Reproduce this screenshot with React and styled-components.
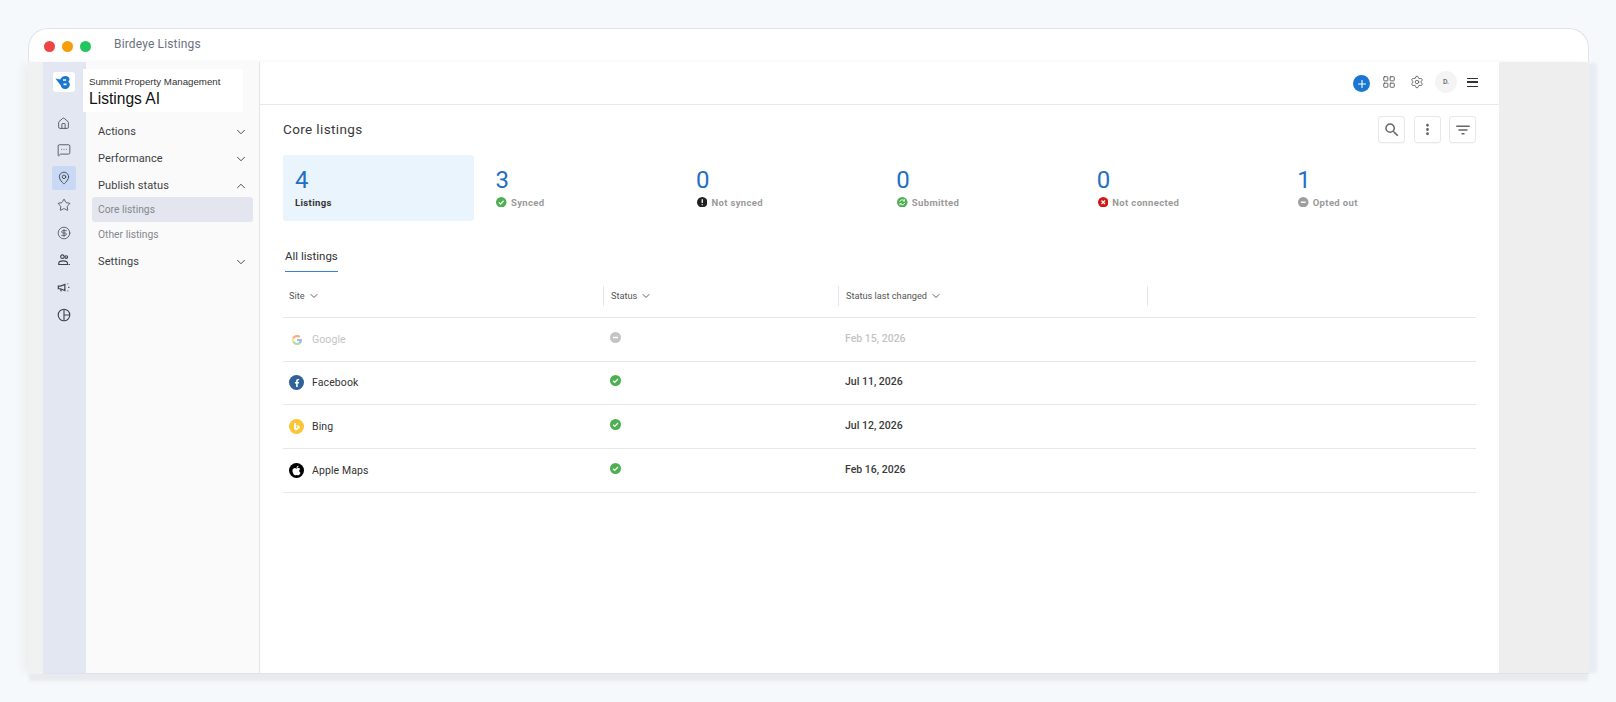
import React from 'react'
import styled, { createGlobalStyle } from 'styled-components'
import {
  House, MessageSquareMore, MapPin, Star, CircleDollarSign,
  ChevronDown, ChevronUp, Plus, LayoutGrid, Settings,
} from 'lucide-react'
import { FcGoogle } from 'react-icons/fc'
import { FaFacebookF, FaApple } from 'react-icons/fa'
import { MdSearch, MdMoreVert, MdFilterList } from 'react-icons/md'

const GlobalStyle = createGlobalStyle`
  html, body { margin: 0; padding: 0; background: #f5f9fc; }
  body { font-family: Roboto, "Liberation Sans", sans-serif; color: #212121; overflow: hidden; }
  * { box-sizing: border-box; }
`

const Page = styled.div`
  width: 1616px;
  height: 702px;
  padding: 28px 27px 0 28px;
`

const Window = styled.div`
  width: 1561px;
  height: 646px;
  display: flex;
  flex-direction: column;
`

const TitleBar = styled.div`
  height: 34px;
  flex: none;
  display: flex;
  align-items: center;
  background: #fff;
  border: 1px solid #dfe3ec;
  border-bottom: 0;
  border-radius: 20px 20px 0 0;
  padding: 0 0 0 15px;
`

const Dot = styled.span`
  width: 11px;
  height: 11px;
  border-radius: 50%;
  margin-right: 7px;
  margin-top: 1px;
  background: ${p => p.$color};
`

const WindowTitle = styled.div`
  margin-left: 16px;
  font-size: 12px;
  letter-spacing: 0.15px;
  color: #6c7280;
  margin-top: -3px;
`

const Body = styled.div`
  flex: 1;
  min-height: 0;
  display: flex;
  background: #f0f1f1;
  padding-left: 15px;
  box-shadow: 0 8px 3px -1px #e8eaee, 9px 0 3px -1px #e8ecf3, -9px 0 7px -2px #eff1f2;
`

const Rail = styled.nav`
  width: 43px;
  flex: none;
  background: #e3e7f1;
  border-bottom: 1px solid #dce3f0;
  display: flex;
  flex-direction: column;
  align-items: center;
  padding: 10px 2px 0 0;
`

const LogoBox = styled.div`
  width: 22px;
  height: 20px;
  background: #fff;
  border-radius: 3px;
  display: flex;
  align-items: center;
  justify-content: center;
  margin-bottom: 19px;
`

const RailItem = styled.div`
  width: 24px;
  height: 24px;
  margin-bottom: 3.4px;
  border-radius: 2px;
  display: flex;
  align-items: center;
  justify-content: center;
  color: #3f444c;
  background: ${p => (p.$active ? '#c9d9f5' : 'transparent')};
`

const Panel = styled.aside`
  width: 174px;
  flex: none;
  background: #fafafa;
  border-right: 1px solid #e4e6ea;
  border-bottom: 1px solid #dce3f0;
  padding-top: 7px;
`

const Brand = styled.div`
  width: 160px;
  height: 43px;
  margin-left: -3px;
  margin-bottom: 6px;
  background: #fff;
  padding: 6px 6px;
  font-family: "Liberation Sans", Arial, sans-serif;
  color: #111;
`

const BrandOrg = styled.div`
  font-size: 9.7px;
  line-height: 13px;
  color: #333;
`

const BrandName = styled.div`
  font-size: 15.6px;
  line-height: 21px;
`

const NavGroup = styled.div`
  height: 27px;
  padding: 0 11px 0 12px;
  margin-bottom: ${p => (p.$open ? '-2px' : '0')};
  display: flex;
  align-items: center;
  justify-content: space-between;
  font-size: 11px;
  letter-spacing: 0.1px;
  color: #3c3f44;
`

const SubItem = styled.div`
  height: 25px;
  margin: 0 6px 0 6px;
  padding-left: 6px;
  border-radius: 3px;
  display: flex;
  align-items: center;
  font-size: 10.3px;
  color: #85888e;
  background: ${p => (p.$active ? '#e3e6ef' : 'transparent')};
  margin-bottom: ${p => (p.$active ? '0' : '1px')};
`

const Main = styled.main`
  width: 1239px;
  flex: none;
  background: #fff;
  border-bottom: 1px solid #dce3f0;
  display: flex;
  flex-direction: column;
`

const TopBar = styled.header`
  height: 43px;
  flex: none;
  border-bottom: 1px solid #e8e9ec;
  display: flex;
  align-items: center;
  justify-content: flex-end;
  padding-right: 19px;
  gap: 9px;
`

const AddButton = styled.div`
  width: 17px;
  height: 17px;
  border-radius: 50%;
  background: #1976d2;
  color: #fff;
  display: flex;
  align-items: center;
  justify-content: center;
  margin: 1px 0 0 0;
`

const TopIcon = styled.div`
  width: 20px;
  display: flex;
  justify-content: center;
  color: #555;
  margin-top: -2px;
  margin-right: ${p => (p.$tight ? '-1px' : '0')};
`

const Avatar = styled.div`
  width: 22px;
  height: 22px;
  border-radius: 50%;
  background: #f4f4f4;
  display: flex;
  align-items: center;
  justify-content: center;
  font-size: 7px;
  font-weight: 500;
  color: #666;
  margin-top: -2px;
`

const Burger = styled.div`
  width: 11px;
  height: 9px;
  margin-left: 1px;
  margin-right: 2px;
  margin-top: -1px;
  border-top: 1.5px solid #333;
  border-bottom: 1.5px solid #333;
  position: relative;
  &::after {
    content: '';
    position: absolute;
    left: 0;
    right: 0;
    top: 2.2px;
    height: 1.5px;
    background: #333;
  }
`

const Content = styled.div`
  flex: 1;
  padding: 11px 23px 0;
`

const HeadRow = styled.div`
  height: 28px;
  display: flex;
  align-items: center;
  justify-content: space-between;
`

const Heading = styled.h1`
  margin: -3px 0 0;
  font-size: 13.5px;
  font-weight: 400;
  letter-spacing: 0.38px;
  color: #3a3a3a;
`

const Tools = styled.div`
  display: flex;
  gap: 8.5px;
  margin-top: -1px;
`

const ToolButton = styled.div`
  width: 27px;
  height: 27px;
  border: 1px solid #e8e8e8;
  border-radius: 3px;
  background: #fff;
  box-shadow: 0 1px 1px rgba(0, 0, 0, 0.03);
  display: flex;
  align-items: center;
  justify-content: center;
  color: #666;
`

const Stats = styled.section`
  display: flex;
  gap: 9.6px;
  margin-top: 11px;
`

const Stat = styled.div`
  flex: 1;
  height: 66px;
  padding: 12px 12px 0;
  border-radius: 3px;
  background: ${p => (p.$active ? '#eaf4fc' : 'transparent')};
`

const StatValue = styled.div`
  font-size: 24px;
  line-height: 26px;
  color: #1f6fc4;
  font-weight: 400;
`

const StatLabel = styled.div`
  margin-top: 4px;
  display: flex;
  align-items: center;
  gap: 4px;
  font-size: 9.5px;
  line-height: 12px;
  font-weight: 700;
  letter-spacing: 0.36px;
  color: ${p => (p.$active ? '#333' : '#9a9a9a')};
  svg { margin: -2px 0 0 1px; }
`

const Tabs = styled.div`
  margin-top: 24px;
  height: 29px;
`

const Tab = styled.div`
  display: inline-block;
  margin-left: 2px;
  height: 25px;
  padding-top: 2px;
  font-size: 11.5px;
  color: #333;
  border-bottom: 1px solid #3b7fd4;
`

const Grid = styled.div`
  display: grid;
  grid-template-columns: 320px 235px 309px 1fr;
  height: ${p => p.$height};
  align-items: center;
  border-bottom: 1px solid #e6e7ea;
`

const HeadCell = styled.div`
  height: 20px;
  display: flex;
  align-items: center;
  gap: 3px;
  padding-left: ${p => (p.$first ? '6px' : '7px')};
  font-size: 9.2px;
  color: #555;
  border-left: ${p => (p.$first ? '0' : '1px solid #e6e7ea')};
  svg { color: #333; }
`

const SiteCell = styled.div`
  display: flex;
  align-items: center;
  gap: 8px;
  padding-left: 6px;
  font-size: 10.5px;
  letter-spacing: 0.1px;
  color: ${p => (p.$muted ? '#c4c4c4' : '#333')};
`

const StatusCell = styled.div`
  padding-left: 7px;
  display: flex;
  margin-top: -4px;
  opacity: ${p => (p.$muted ? 0.6 : 1)};
`

const DateCell = styled.div`
  padding-left: 7px;
  font-size: 10.5px;
  font-weight: 500;
  margin-top: -2px;
  color: ${p => (p.$muted ? '#c4c4c4' : '#3a3a3a')};
`

const SiteBadge = styled.span`
  width: 15px;
  height: 15px;
  border-radius: 50%;
  flex: none;
  display: flex;
  align-items: center;
  justify-content: center;
  color: #fff;
  background: ${p => p.$bg};
  opacity: ${p => (p.$muted ? 0.45 : 1)};
`

const Gutter = styled.div`
  flex: 1;
  background: #eee;
  border-bottom: 1px solid #dce3f0;
`

function StatusIcon({ type, size = 10.5 }) {
  const fill = { ok: '#4caf50', bad: '#212121', sub: '#4caf50', off: '#d11a16', out: '#9e9e9e' }[type]
  return (
    <svg width={size} height={size} viewBox="0 0 12 12" style={{ flex: 'none' }}>
      <circle cx="6" cy="6" r="6" fill={fill} />
      {type === 'ok' && <path d="M3.3 6.2l1.9 1.9 3.5-3.8" fill="none" stroke="#fff" strokeWidth="1.4" />}
      {type === 'bad' && <path d="M6 2.6v4.2M6 8.2v1.2" fill="none" stroke="#fff" strokeWidth="1.5" />}
      {type === 'sub' && <path d="M3 5.5a3 3 0 0 1 5.4-1M9 6.5a3 3 0 0 1-5.4 1M8.6 2.6v2H6.7M3.4 9.4v-2h1.9" fill="none" stroke="#fff" strokeWidth="1" />}
      {type === 'off' && <path d="M4 4l4 4M8 4l-4 4" fill="none" stroke="#fff" strokeWidth="1.4" />}
      {type === 'out' && <path d="M3.2 6h5.6" fill="none" stroke="#fff" strokeWidth="1.6" />}
    </svg>
  )
}

const BirdLogo = () => (
  <svg width="17" height="15" viewBox="0 0 18 16">
    <path d="M.5 3.6l5 1.2C6.6 2.2 8.8 1 11.2 1c2.5 0 4.2 1.4 4.2 3.4 0 1.2-.6 2.1-1.4 2.7 1 .6 1.7 1.6 1.7 2.9 0 2.8-2.2 4.9-5 4.9-2.5 0-4.3-1.5-4.8-3.9L.5 3.6z" fill="#1976d2" />
    <path d="M8.4 4.4h3.4v1.7H8.4zM9 9h3.2v1.9H9z" fill="#fff" />
  </svg>
)

const PeopleIcon = () => (
  <svg width="14" height="14" viewBox="0 0 16 16" fill="none" stroke="currentColor" strokeWidth="1.3">
    <circle cx="6.2" cy="4.2" r="2" />
    <circle cx="10.6" cy="4.6" r="1.5" />
    <path d="M2 13.2v-1.4C2 10.2 4 9 7 9s5 1.2 5 2.8v1.4z" />
    <path d="M13.2 13.2h1.6" />
  </svg>
)

const HornIcon = () => (
  <svg width="14" height="14" viewBox="0 0 16 16" fill="none" stroke="currentColor" strokeWidth="1.4">
    <path d="M1.5 7v3h2.5l5 2V5L4 7z" />
    <path d="M4 10.5l1 2.5" />
    <path d="M12 4.5h.8M12.8 8.5h1.4M12 12.5h.8" />
  </svg>
)

const PieIcon = () => (
  <svg width="14" height="14" viewBox="0 0 16 16" fill="none" stroke="currentColor" strokeWidth="1.3">
    <circle cx="8" cy="8" r="6.6" />
    <path d="M8 1.4v13.2M8 8h6.6" />
  </svg>
)

const BingMark = () => (
  <svg width="9" height="9" viewBox="0 0 10 10">
    <path d="M2.4.8l2 .7v5.4l2.2-1.2-1.1-.5-.7-1.8 4 1.4v2L4.4 9.4l-2-1.1z" fill="#fff" />
  </svg>
)

const railItems = [
  { icon: <House size={13} strokeWidth={1.5} /> },
  { icon: <MessageSquareMore size={14} strokeWidth={1.4} /> },
  { icon: <MapPin size={14} strokeWidth={1.5} />, active: true },
  { icon: <Star size={14} strokeWidth={1.4} /> },
  { icon: <CircleDollarSign size={14} strokeWidth={1.3} /> },
  { icon: <PeopleIcon /> },
  { icon: <HornIcon /> },
  { icon: <PieIcon /> },
]

const stats = [
  { value: 4, label: 'Listings', active: true },
  { value: 3, label: 'Synced', type: 'ok' },
  { value: 0, label: 'Not synced', type: 'bad' },
  { value: 0, label: 'Submitted', type: 'sub' },
  { value: 0, label: 'Not connected', type: 'off' },
  { value: 1, label: 'Opted out', type: 'out' },
]

const rows = [
  { site: 'Google', date: 'Feb 15, 2026', status: 'out', height: '44px', muted: true, badge: '#fff', mark: <FcGoogle size={12} /> },
  { site: 'Facebook', date: 'Jul 11, 2026', status: 'ok', height: '42.5px', badge: '#2f6296', mark: <FaFacebookF size={8} /> },
  { site: 'Bing', date: 'Jul 12, 2026', status: 'ok', height: '44.5px', badge: '#fcc536', mark: <BingMark /> },
  { site: 'Apple Maps', date: 'Feb 16, 2026', status: 'ok', height: '44px', badge: '#000', mark: <FaApple size={11} /> },
]

const Chev = () => <ChevronDown size={14} strokeWidth={1.6} />
const SmallChev = () => <ChevronDown size={12} strokeWidth={1.6} />

export default function App() {
  return (
    <Page>
      <GlobalStyle />
      <Window>
        <TitleBar>
          <Dot $color="#ef4444" />
          <Dot $color="#f59e0b" />
          <Dot $color="#22c55e" />
          <WindowTitle>Birdeye Listings</WindowTitle>
        </TitleBar>
        <Body>
          <Rail>
            <LogoBox><BirdLogo /></LogoBox>
            {railItems.map((item, i) => (
              <RailItem key={i} $active={item.active}>{item.icon}</RailItem>
            ))}
          </Rail>
          <Panel>
            <Brand>
              <BrandOrg>Summit Property Management</BrandOrg>
              <BrandName>Listings AI</BrandName>
            </Brand>
            <NavGroup>Actions <Chev /></NavGroup>
            <NavGroup>Performance <Chev /></NavGroup>
            <NavGroup $open>Publish status <ChevronUp size={14} strokeWidth={1.6} /></NavGroup>
            <SubItem $active>Core listings</SubItem>
            <SubItem>Other listings</SubItem>
            <NavGroup>Settings <Chev /></NavGroup>
          </Panel>
          <Main>
            <TopBar>
              <AddButton><Plus size={12} strokeWidth={2.2} /></AddButton>
              <TopIcon $tight><LayoutGrid size={14} strokeWidth={1.5} /></TopIcon>
              <TopIcon $tight><Settings size={14} strokeWidth={1.4} /></TopIcon>
              <Avatar>D.</Avatar>
              <Burger />
            </TopBar>
            <Content>
              <HeadRow>
                <Heading>Core listings</Heading>
                <Tools>
                  <ToolButton><MdSearch size={18} /></ToolButton>
                  <ToolButton><MdMoreVert size={17} /></ToolButton>
                  <ToolButton><MdFilterList size={18} /></ToolButton>
                </Tools>
              </HeadRow>
              <Stats>
                {stats.map(s => (
                  <Stat key={s.label} $active={s.active}>
                    <StatValue>{s.value}</StatValue>
                    <StatLabel $active={s.active}>
                      {s.type && <StatusIcon type={s.type} />}
                      {s.label}
                    </StatLabel>
                  </Stat>
                ))}
              </Stats>
              <Tabs><Tab>All listings</Tab></Tabs>
              <Grid $height="44px">
                <HeadCell $first>Site <SmallChev /></HeadCell>
                <HeadCell>Status <SmallChev /></HeadCell>
                <HeadCell>Status last changed <SmallChev /></HeadCell>
                <HeadCell />
              </Grid>
              {rows.map(r => (
                <Grid key={r.site} $height={r.height}>
                  <SiteCell $muted={r.muted}>
                    <SiteBadge $bg={r.badge} $muted={r.muted}>{r.mark}</SiteBadge>
                    {r.site}
                  </SiteCell>
                  <StatusCell $muted={r.muted}><StatusIcon type={r.status} size={11} /></StatusCell>
                  <DateCell $muted={r.muted}>{r.date}</DateCell>
                </Grid>
              ))}
            </Content>
          </Main>
          <Gutter />
        </Body>
      </Window>
    </Page>
  )
}
